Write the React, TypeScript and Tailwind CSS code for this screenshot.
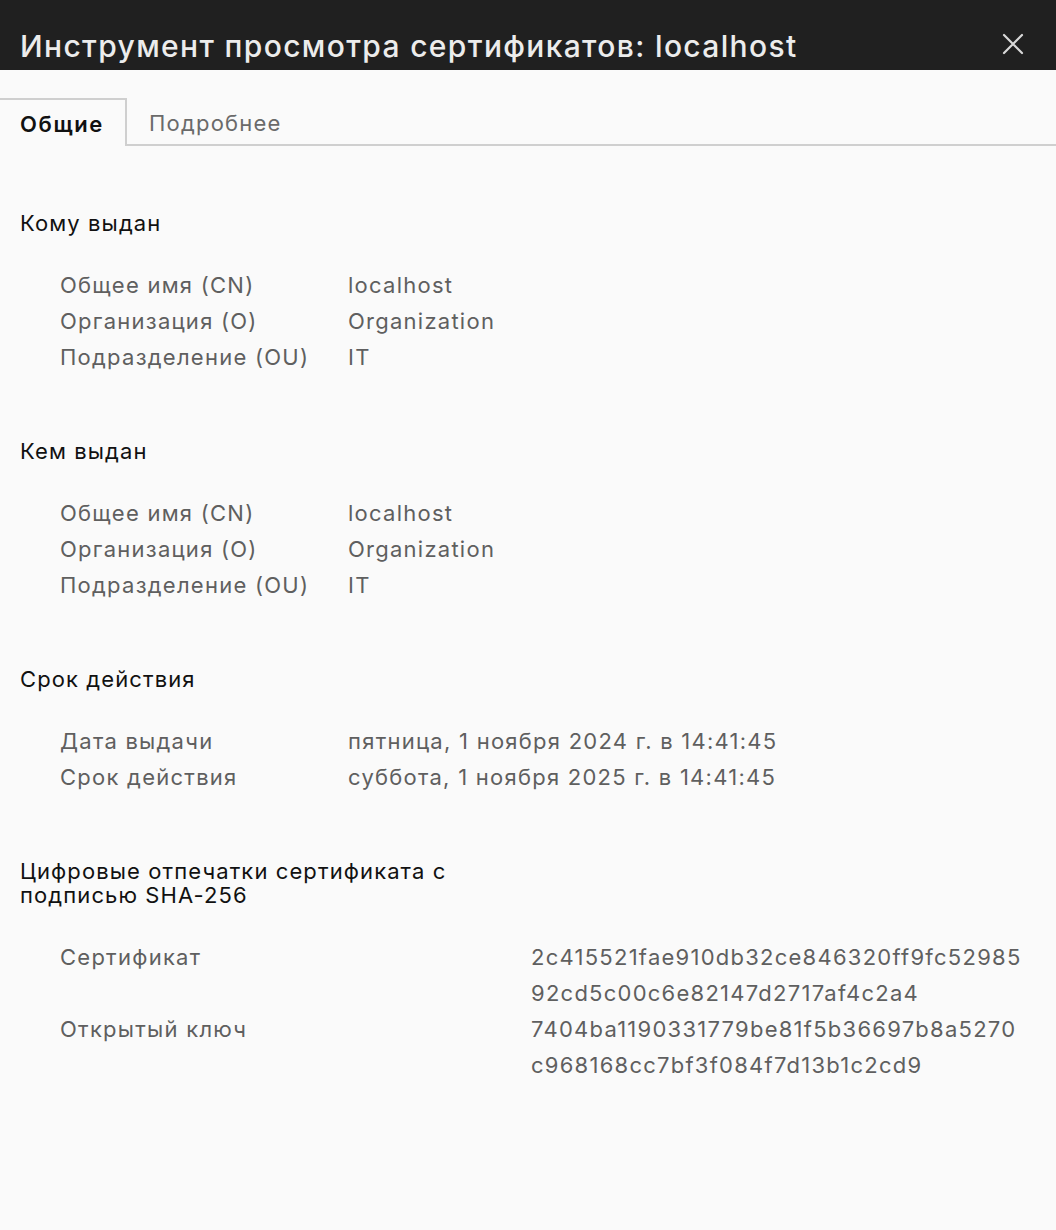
import React from 'react';

type Row = { label: string; value: React.ReactNode };

const font = { fontFamily: 'Inter, "Liberation Sans", Arial, sans-serif' };

function Section({ title, rows, valueCol = 'w-[288px]' }: { title: React.ReactNode; rows: Row[]; valueCol?: string }) {
  return (
    <section className="mb-[64px]">
      <h2 className="text-[22px] leading-[24px] tracking-[1.1px] text-[#111]">{title}</h2>
      <div className="mt-[32px] pl-[40px]">
        {rows.map((r, i) => (
          <div key={i} className="flex text-[22px] leading-[36px] tracking-[1.25px] text-[#5f5f5f]">
            <div className={`${valueCol} shrink-0`}>{r.label}</div>
            <div>{r.value}</div>
          </div>
        ))}
      </div>
    </section>
  );
}

export default function App() {
  const subject: Row[] = [
    { label: 'Общее имя (CN)', value: 'localhost' },
    { label: 'Организация (O)', value: 'Organization' },
    { label: 'Подразделение (OU)', value: 'IT' },
  ];

  return (
    <div className="w-[1056px] h-[1230px] bg-[#fafafa] flex flex-col" style={font}>
      {/* заголовок окна */}
      <header className="h-[70px] bg-[#202020] flex items-end justify-between pl-[20px] pr-[32px] pb-[1px]">
        <h1 className="text-[30px] leading-[46px] tracking-[1.35px] font-medium text-[#ececec]">
          Инструмент просмотра сертификатов: localhost
        </h1>
        <button className="mb-[14px] text-[#d8d8d8]" aria-label="Закрыть">
          <svg width="22" height="22" viewBox="0 0 22 22" fill="none" stroke="currentColor" strokeWidth="2.2" strokeLinecap="round">
            <path d="M2 2 L20 20 M20 2 L2 20" />
          </svg>
        </button>
      </header>

      {/* вкладки */}
      <nav className="mt-[28px] flex items-end border-b-2 border-[#cfcfcf] h-[48px]">
        <div className="h-[48px] w-[127px] -mb-[2px] bg-[#fafafa] border-t-2 border-r-2 border-[#cfcfcf] flex items-center pl-[20px] pt-[2px] text-[22px] tracking-[1.6px] font-semibold text-[#111]">
          Общие
        </div>
        <div className="h-[46px] flex items-center pl-[22px] pt-[4px] text-[22px] tracking-[1.2px] text-[#6a6a6a]">Подробнее</div>
      </nav>

      <main className="px-[20px] pt-[65px]">
        <Section title="Кому выдан" rows={subject} />
        <Section title="Кем выдан" rows={subject} />
        <Section
          title="Срок действия"
          rows={[
            { label: 'Дата выдачи', value: 'пятница, 1 ноября 2024 г. в 14:41:45' },
            { label: 'Срок действия', value: 'суббота, 1 ноября 2025 г. в 14:41:45' },
          ]}
        />
        <Section
          title={<>Цифровые отпечатки сертификата с<br />подписью SHA-256</>}
          valueCol="w-[471px]"
          rows={[
            { label: 'Сертификат', value: <>2c415521fae910db32ce846320ff9fc52985<br />92cd5c00c6e82147d2717af4c2a4</> },
            { label: 'Открытый ключ', value: <>7404ba1190331779be81f5b36697b8a5270<br />c968168cc7bf3f084f7d13b1c2cd9</> },
          ]}
        />
      </main>
    </div>
  );
}
